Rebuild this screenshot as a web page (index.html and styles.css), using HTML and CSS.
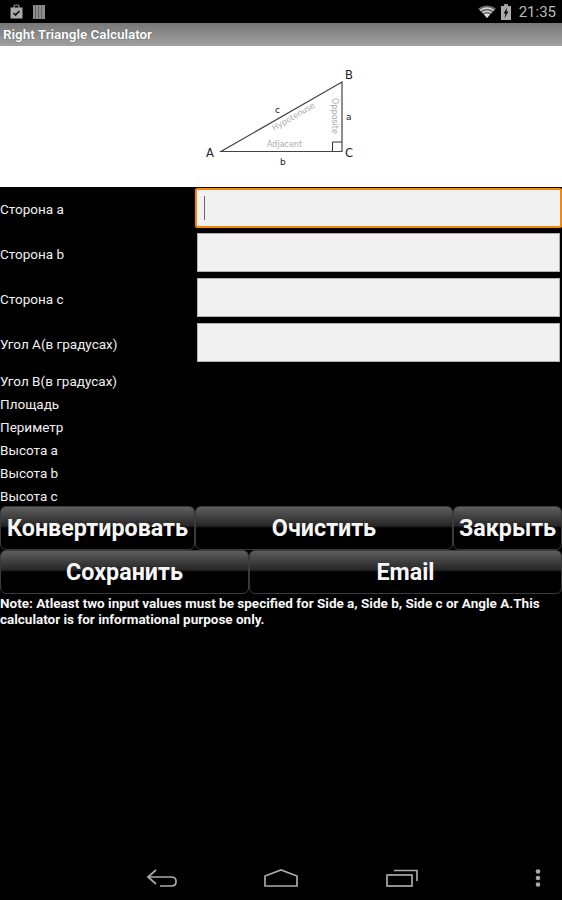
FILE: index.html
```html
<!DOCTYPE html>
<html lang="en">
<head>
  <meta charset="UTF-8">
  <meta name="viewport" content="width=device-width, initial-scale=1.0">
  <title>Right Triangle Calculator</title>
  <link rel="stylesheet" href="styles.css">
</head>
<body>
  <div class="status-bar">
    <div class="status-left">
      <svg width="13" height="15" viewBox="0 0 13 15">
        <path d="M4 4V2.500Q4 1 5.500 1h2Q9 1 9 2.500V4" fill="none" stroke="#999" stroke-width="1.200"/>
        <rect x="0.500" y="3.500" width="12" height="11" fill="#aaa"/>
        <path d="M3.500 9l2 2 4-4" fill="none" stroke="#111" stroke-width="1.600"/>
      </svg>
      <svg width="12" height="14" viewBox="0 0 12 14">
        <rect width="12" height="14" fill="#8c8c8c"/>
        <path d="M2.500 0v14M5.500 0v14M8.500 0v14" stroke="#666" stroke-width="1"/>
      </svg>
    </div>
    <div class="status-right">
      <svg width="18" height="13" viewBox="0 0 18 13">
        <path d="M0 3.500Q9 -2.500 18 3.500L9 13Z" fill="#6a6a6a"/>
        <path d="M2 5.500Q9 0.500 16 5.500" fill="none" stroke="#ddd" stroke-width="1.300"/>
        <path d="M4.500 7.800Q9 4.500 13.500 7.800" fill="none" stroke="#ddd" stroke-width="1.300"/>
        <path d="M6 9.500Q9 7.500 12 9.500L9 13Z" fill="#ddd"/>
      </svg>
      <svg width="10" height="16" viewBox="0 0 10 16">
        <rect x="3" width="4" height="2" fill="#999"/>
        <rect y="2" width="10" height="14" fill="#aaa"/>
        <path d="M6 3.500L2.500 9.500h2L3.500 14.500 7.500 7.500h-2Z" fill="#111"/>
      </svg>
      <span class="clock">21:35</span>
    </div>
  </div>

  <div class="title-bar">Right Triangle Calculator</div>

  <div class="banner">
    <svg width="180" height="120" viewBox="0 0 180 120">
      <path d="M31 96.500H152V27Z" fill="none" stroke="#444" stroke-width="1.200"/>
      <path d="M142.500 96.500v-9.500H152" fill="none" stroke="#333" stroke-width="1"/>
      <text class="tri-label" x="16" y="102">A</text>
      <text class="tri-label" x="155" y="24">B</text>
      <text class="tri-label" x="155" y="102">C</text>
      <text class="tri-label small" x="85" y="58">c</text>
      <text class="tri-label small" x="156" y="65">a</text>
      <text class="tri-label small" x="90" y="110">b</text>
      <text class="tri-note" x="77" y="92">Adjacent</text>
      <text class="tri-note" transform="translate(84 76) rotate(-30)">Hypotenuse</text>
      <text class="tri-note" transform="translate(142 43) rotate(90)">Opposite</text>
    </svg>
  </div>

  <div class="inputs">
    <div class="input-row">
      <span class="field-label">Сторона a</span>
      <div class="field focused"><span class="caret"></span></div>
    </div>
    <div class="input-row">
      <span class="field-label">Сторона b</span>
      <div class="field"></div>
    </div>
    <div class="input-row">
      <span class="field-label">Сторона c</span>
      <div class="field"></div>
    </div>
    <div class="input-row">
      <span class="field-label">Угол A(в градусах)</span>
      <div class="field"></div>
    </div>
  </div>

  <div class="results">
    <div class="result">Угол B(в градусах)</div>
    <div class="result">Площадь</div>
    <div class="result">Периметр</div>
    <div class="result">Высота a</div>
    <div class="result">Высота b</div>
    <div class="result">Высота c</div>
  </div>

  <div class="button-row first">
    <button class="btn-convert">Конвертировать</button>
    <button class="btn-clear">Очистить</button>
    <button class="btn-close">Закрыть</button>
  </div>
  <div class="button-row">
    <button class="btn-save">Сохранить</button>
    <button class="btn-email">Email</button>
  </div>

  <p class="note">Note: Atleast two input values must be specified for Side a, Side b, Side c or Angle A.This calculator is for informational purpose only.</p>

  <div class="nav-bar">
    <svg class="nav-back" width="32" height="18" viewBox="0 0 32 18">
      <path d="M10 1L2 8l8 7M2 8h23q5 0 5 4v1q0 4-5 4H14" fill="none" stroke="#aaa" stroke-width="1.700"/>
    </svg>
    <svg class="nav-home" width="34" height="18" viewBox="0 0 34 18">
      <path d="M1 17V7L17 1l16 6v10Z" fill="none" stroke="#aaa" stroke-width="1.700"/>
    </svg>
    <svg class="nav-recent" width="32" height="18" viewBox="0 0 32 18">
      <rect x="1" y="6" width="25" height="11" fill="none" stroke="#aaa" stroke-width="1.700"/>
      <path d="M8 1.500h23V12" fill="none" stroke="#aaa" stroke-width="1.700"/>
    </svg>
    <svg class="nav-menu" width="6" height="18" viewBox="0 0 6 18">
      <circle cx="3" cy="2.500" r="2.300" fill="#aaa"/>
      <circle cx="3" cy="9" r="2.300" fill="#aaa"/>
      <circle cx="3" cy="15.500" r="2.300" fill="#aaa"/>
    </svg>
  </div>
</body>
</html>
```

FILE: styles.css
```css
body {
  font-family: Roboto, sans-serif;
  background-color: #000;
  color: #fff;
  margin: 0;
  width: 562px;
  height: 900px;
  overflow: hidden;
  display: flex;
  flex-direction: column;
}

.status-bar {
  height: 23px;
  display: flex;
  justify-content: space-between;
  align-items: center;
  padding: 0 6px 0 10px;
}

.status-left {
  display: flex;
  align-items: center;
  gap: 10px;
}

.status-right {
  display: flex;
  align-items: center;
  gap: 5px;
}

.clock {
  font-size: 15px;
  color: #bbb;
  margin-left: 3px;
}

.title-bar {
  height: 23px;
  line-height: 23px;
  padding-left: 3px;
  font-size: 13.4px;
  font-weight: 700;
  background: linear-gradient(#777, #a0a0a0);
  text-shadow: 0 0 1px #333;
}

.banner {
  height: 141px;
  background-color: #fff;
  display: flex;
  justify-content: center;
  align-items: flex-start;
}

.banner svg {
  margin: 9px 0 0 -2px;
}

.tri-label {
  font-family: "DejaVu Sans", sans-serif;
  font-size: 11.5px;
  fill: #222;
}

.tri-label.small {
  font-size: 9px;
}

.tri-note {
  font-family: "DejaVu Sans", sans-serif;
  font-size: 8px;
  fill: #aaa;
}

.input-row {
  height: 45px;
  display: flex;
  align-items: flex-start;
}

.field-label {
  width: 197px;
  font-size: 13.5px;
  line-height: 45px;
  color: #f0f0f0;
}

.field {
  width: 361px;
  height: 37px;
  background-color: #f1f1f1;
  border: 1px solid #b0b0b0;
  margin-top: 1px;
  display: flex;
  align-items: center;
}

.field.focused {
  width: 363px;
  height: 36px;
  border: 2px solid #f08a0c;
  border-radius: 3px;
  margin-left: -2px;
  box-shadow: 0 0 1px #f08a0c;
}

.caret {
  width: 1px;
  height: 24px;
  background-color: #666;
  margin-left: 7px;
}

.results {
  padding-top: 3px;
}

.result {
  height: 23px;
  line-height: 23px;
  font-size: 13.5px;
  color: #f0f0f0;
}

.button-row {
  display: flex;
  height: 44px;
}

.button-row.first {
  margin-top: -2px;
}

button {
  font-family: Roboto, sans-serif;
  font-size: 23.3px;
  font-weight: 700;
  color: #f6f6f6;
  padding: 0;
  background: linear-gradient(#5e5e5e 0, #262626 45%, #000 50%, #000 100%);
  border: 1px solid #3a3a3a;
  border-radius: 6px;
  box-sizing: border-box;
}

.btn-convert {
  width: 195px;
}

.btn-clear {
  width: 258px;
}

.btn-close {
  width: 109px;
}

.btn-save {
  width: 249px;
}

.btn-email {
  width: 313px;
}

.note {
  margin: 1px 0 0;
  font-size: 13.5px;
  font-weight: 700;
  line-height: 16px;
  color: #f6f6f6;
}

.nav-bar {
  margin-top: auto;
  height: 48px;
  position: relative;
}

.nav-bar svg {
  position: absolute;
  top: 17px;
}

.nav-back {
  left: 146px;
}

.nav-home {
  left: 264px;
}

.nav-recent {
  left: 386px;
}

.nav-menu {
  left: 535px;
}
```
